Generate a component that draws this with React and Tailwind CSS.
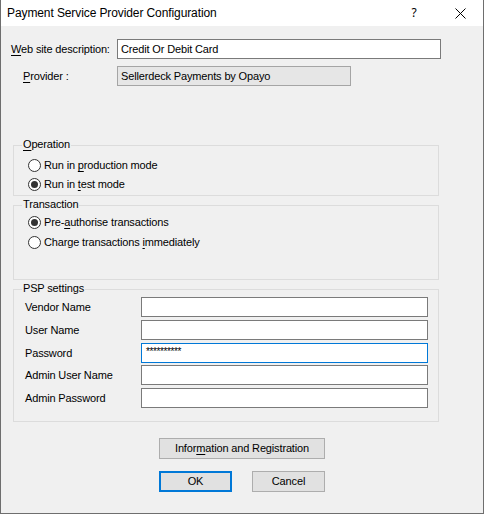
import React from "react";

function Radio({ checked, children }) {
  return (
    <div className="flex items-center h-[13px]">
      <span className="w-[13px] h-[13px] rounded-full border border-[#333333] bg-white flex items-center justify-center shrink-0">
        {checked && <span className="w-[7px] h-[7px] rounded-full bg-[#333333]" />}
      </span>
      <span className="ml-[3px] leading-[13px] whitespace-nowrap">{children}</span>
    </div>
  );
}

function Group({ label, className, children }) {
  return (
    <div className={"relative mx-[12px] w-[426px] border border-[#dcdcdc] " + className}>
      <span className="absolute top-[-8px] left-[8px] px-[1px] bg-[#f0f0f0] leading-[13px] whitespace-nowrap">
        {label}
      </span>
      {children}
    </div>
  );
}

function PspRow({ label, className, active, value }) {
  return (
    <div className={"flex items-center h-[20px] " + (className || "")}>
      <span className="w-[127px] pl-[11px] whitespace-nowrap">{label}</span>
      <div
        className={
          "w-[287px] h-[20px] bg-white border flex items-start pl-[4px] " +
          (active ? "border-[#0078d7]" : "border-[#7a7a7a]")
        }
      >
        {value && (
          <span className="text-[10px] tracking-[-0.4px] leading-[10px] pt-[3px]">{value}</span>
        )}
      </div>
    </div>
  );
}

export default function App() {
  return (
    <div className="w-[484px] h-[514px] flex flex-col bg-[#f0f0f0] border-x border-b border-[#6e6e6e] font-['Liberation_Sans',Arial,sans-serif] text-[11px] text-black tracking-[-0.15px] overflow-hidden">
      {/* Title bar */}
      <div className="h-[26px] bg-white flex items-center shrink-0">
        <span className="flex-1 pl-[6px] text-[12px] tracking-[-0.1px] whitespace-nowrap">
          Payment Service Provider Configuration
        </span>
        <span className="w-[46px] h-[26px] flex items-center justify-center font-['Noto_Sans',sans-serif] text-[12px] tracking-normal">
          ?
        </span>
        <span className="w-[46px] h-[26px] flex items-center justify-center">
          <svg width="11" height="11" viewBox="0 0 11 11">
            <path d="M0.5 0.5 L10.5 10.5 M10.5 0.5 L0.5 10.5" stroke="#000" strokeWidth="1" fill="none" />
          </svg>
        </span>
      </div>

      {/* Body */}
      <div className="flex flex-col">
        <div className="flex items-center mt-[13px] pl-[10px] h-[20px]">
          <span className="w-[106px] whitespace-nowrap">
            <u className="underline-offset-[2px]">W</u>eb site description:
          </span>
          <div className="w-[324px] h-[20px] bg-white border border-[#7a7a7a] flex items-center pl-[3px]">
            Credit Or Debit Card
          </div>
        </div>

        <div className="flex items-center mt-[7px] pl-[22px] h-[20px]">
          <span className="w-[94px] whitespace-nowrap">
            <u className="underline-offset-[2px]">P</u>rovider :
          </span>
          <div className="w-[234px] h-[20px] bg-[#e6e6e6] border border-[#a5a5a5] flex items-center pl-[3px]">
            Sellerdeck Payments by Opayo
          </div>
        </div>

        <Group
          label={
            <>
              <u className="underline-offset-[2px]">O</u>peration
            </>
          }
          className="mt-[59px] h-[51px] pt-[13px] pl-[14px]"
        >
          <div className="flex flex-col gap-[6px]">
            <Radio>
              Run in <u className="underline-offset-[2px]">p</u>roduction mode
            </Radio>
            <Radio checked>
              Run in <u className="underline-offset-[2px]">t</u>est mode
            </Radio>
          </div>
        </Group>

        <Group label="Transaction" className="mt-[9px] h-[75px] pt-[10px] pl-[14px]">
          <div className="flex flex-col gap-[7px]">
            <Radio checked>
              Pre-<u className="underline-offset-[2px]">a</u>uthorise transactions
            </Radio>
            <Radio>
              Charge transactions <u className="underline-offset-[2px]">i</u>mmediately
            </Radio>
          </div>
        </Group>

        <Group label="PSP settings" className="mt-[9px] h-[133px] pt-[7px]">
          <div className="flex flex-col">
            <PspRow label="Vendor Name" />
            <PspRow label="User Name" className="mt-[3px]" />
            <PspRow label="Password" className="mt-[3px]" active value="**********" />
            <PspRow label="Admin User Name" className="mt-[2px]" />
            <PspRow label="Admin Password" className="mt-[3px]" />
          </div>
        </Group>

        <div className="flex justify-center mt-[16px]">
          <button className="w-[166px] h-[21px] bg-[#e1e1e1] border border-[#adadad] flex items-center justify-center">
            Infor<u className="underline-offset-[2px]">m</u>ation and Registration
          </button>
        </div>

        <div className="flex justify-center gap-[20px] mt-[12px]">
          <button className="w-[73px] h-[21px] bg-[#e1e1e1] border-2 border-[#0078d7] flex items-center justify-center">
            OK
          </button>
          <button className="w-[73px] h-[21px] bg-[#e1e1e1] border border-[#adadad] flex items-center justify-center">
            Cancel
          </button>
        </div>
      </div>
    </div>
  );
}
